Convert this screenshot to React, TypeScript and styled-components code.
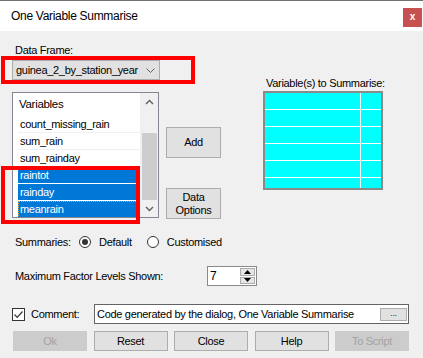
import React from "react";
import styled, { createGlobalStyle } from "styled-components";

const GlobalStyle = createGlobalStyle`
  html, body { margin: 0; padding: 0; background: #f0f0f0; }
  body {
    font-family: "Liberation Sans", Arial, sans-serif;
    font-size: 11px;
    letter-spacing: -0.3px;
    color: #000;
  }
  * { box-sizing: border-box; }
`;

const Window = styled.div`
  width: 423px;
  height: 358px;
  background: #f0f0f0;
  display: flex;
  flex-direction: column;
  overflow: hidden;
`;

const TitleBar = styled.div`
  height: 31px;
  flex-shrink: 0;
  background: #fff;
  border-top: 1px solid #707070;
  display: flex;
  justify-content: space-between;
  align-items: flex-start;
`;

const Title = styled.span`
  margin: 8px 0 0 11px;
  font-size: 12px;
  line-height: 14px;
`;

const CloseButton = styled.div`
  width: 19px;
  height: 19px;
  margin: 7px 1px 0 0;
  background: #c75050;
  color: #fff;
  font-weight: bold;
  font-size: 10px;
  display: flex;
  align-items: center;
  justify-content: center;
  padding-bottom: 2px;
`;

const Body = styled.div`
  flex: 1;
  display: flex;
  flex-direction: column;
`;

const TopSection = styled.div`
  display: flex;
  align-items: flex-start;
`;

const LeftCol = styled.div`
  width: 159px;
  flex-shrink: 0;
  display: flex;
  flex-direction: column;
`;

const FieldLabel = styled.div`
  margin-top: 13px;
  padding-left: 15px;
  line-height: 12px;
`;

const Highlight = styled.div`
  margin-left: 1px;
  width: 194px;
  height: 28px;
  border: 4px solid #ff0000;
  padding-left: 7px;
  flex-shrink: 0;
`;

const ComboBox = styled.div`
  width: 148px;
  height: 20px;
  background: #e1e1e1;
  border: 1px solid #adadad;
  display: flex;
  align-items: center;
  justify-content: space-between;
  padding: 0 4px 0 3px;
`;

const ListWrap = styled.div`
  position: relative;
  margin: 8px 0 0 12px;
  width: 147px;
  height: 126px;
`;

const ListBox = styled.div`
  height: 100%;
  border: 1px solid #828790;
  background: #fff;
  display: flex;
  overflow: hidden;
`;

const ListContent = styled.div`
  flex: 1;
  display: flex;
  flex-direction: column;
  border-right: 1px solid #f0f0f0;
`;

const ListHeader = styled.div`
  height: 23px;
  line-height: 23px;
  padding-left: 6px;
  font-size: 11.5px;
`;

const ListRow = styled.div<{ $selected?: boolean; $focus?: boolean }>`
  height: 17px;
  flex-shrink: 0;
  margin-left: 5px;
  padding-left: 2px;
  line-height: 16px;
  white-space: nowrap;
  border-bottom: 1px solid ${(p) => (p.$selected ? "#fff" : "#f0f0f0")};
  background: ${(p) => (p.$selected ? "#0078d7" : "transparent")};
  color: ${(p) => (p.$selected ? "#fff" : "#000")};
  outline: ${(p) => (p.$focus ? "1px dotted #f0a030" : "none")};
  outline-offset: -1px;
`;

const ScrollBar = styled.div`
  width: 17px;
  flex-shrink: 0;
  background: #f0f0f0;
  display: flex;
  flex-direction: column;
`;

const ScrollButton = styled.div`
  height: 17px;
  flex-shrink: 0;
  display: flex;
  align-items: center;
  justify-content: center;
`;

const ScrollTrack = styled.div`
  flex: 1;
  padding: 23px 1px 0;
  display: flex;
`;

const ScrollThumb = styled.div`
  flex: 1;
  background: #cdcdcd;
`;

const SelectionMark = styled.div`
  position: absolute;
  left: -11px;
  top: 74px;
  width: 139px;
  height: 58px;
  border: 4px solid #ff0000;
`;

const MidCol = styled.div`
  margin-left: 7px;
  width: 55px;
  flex-shrink: 0;
  display: flex;
  flex-direction: column;
`;

const PushButton = styled.button<{ $top?: number }>`
  margin-top: ${(p) => p.$top ?? 0}px;
  height: 31px;
  width: 55px;
  padding: 0;
  background: #e1e1e1;
  border: 1px solid #adadad;
  font: inherit;
  letter-spacing: -0.3px;
  line-height: 13px;
  color: #000;
`;

const RightCol = styled.div`
  margin-left: 42px;
  width: 121px;
  flex-shrink: 0;
  display: flex;
  flex-direction: column;
`;

const RightLabel = styled.div`
  margin-top: 46px;
  line-height: 12px;
  padding-left: 3px;
  white-space: nowrap;
`;

const SummaryGrid = styled.div`
  margin-top: 2px;
  width: 120px;
  height: 99px;
  border: 2px solid #8a8a8a;
  background: #fff;
  display: grid;
  grid-template-columns: 95px 20px;
  grid-auto-rows: 16px;
  gap: 1px;
  overflow: hidden;
`;

const GridCell = styled.div`
  background: #00ffff;
`;

const OptionRow = styled.div<{ $top: number; $left: number; $height: number }>`
  margin-top: ${(p) => p.$top}px;
  padding-left: ${(p) => p.$left}px;
  height: ${(p) => p.$height}px;
  display: flex;
  align-items: center;
  flex-shrink: 0;
`;

const RowLabel = styled.span<{ $width: number }>`
  width: ${(p) => p.$width}px;
  flex-shrink: 0;
  white-space: nowrap;
`;

const RadioOption = styled.label`
  display: flex;
  align-items: center;
  gap: 8px;
  margin-right: 15px;
`;

const RadioCircle = styled.span<{ $checked?: boolean }>`
  width: 12px;
  height: 12px;
  border-radius: 50%;
  border: 1px solid #333;
  background: #fff;
  display: flex;
  align-items: center;
  justify-content: center;
  &::after {
    content: "";
    width: 6px;
    height: 6px;
    border-radius: 50%;
    background: ${(p) => (p.$checked ? "#333" : "transparent")};
  }
`;

const SpinBox = styled.div`
  width: 50px;
  height: 20px;
  border: 1px solid #8a8a8a;
  background: #fff;
  display: flex;
  align-items: stretch;
`;

const SpinValue = styled.span`
  flex: 1;
  padding-left: 2px;
  line-height: 18px;
  font-size: 12px;
`;

const SpinButtons = styled.div`
  width: 15px;
  margin: 1px 1px 1px 0;
  display: flex;
  flex-direction: column;
  gap: 1px;
`;

const SpinButton = styled.div`
  flex: 1;
  background: #e6e6e6;
  border: 1px solid #acacac;
  display: flex;
  align-items: center;
  justify-content: center;
`;

const CheckBox = styled.span`
  width: 13px;
  height: 13px;
  flex-shrink: 0;
  border: 1px solid #333;
  background: #fff;
  display: flex;
  align-items: center;
  justify-content: center;
  margin-right: 6px;
`;

const TextBox = styled.div`
  width: 315px;
  height: 20px;
  border: 1px solid #646464;
  background: #fff;
  display: flex;
  align-items: center;
  justify-content: space-between;
  padding: 0 1px 0 2px;
  white-space: nowrap;
`;

const EllipsisButton = styled.span`
  width: 27px;
  height: 13px;
  background: #e1e1e1;
  border: 1px solid #adadad;
  font-size: 9px;
  line-height: 9px;
  text-align: center;
  color: #333;
`;

const ButtonRow = styled.div`
  margin-top: 7px;
  padding-left: 13px;
  display: flex;
  gap: 6.5px;
`;

const DialogButton = styled.button<{ $disabled?: boolean }>`
  width: 74px;
  height: 20px;
  padding: 0;
  font: inherit;
  letter-spacing: -0.3px;
  background: ${(p) => (p.$disabled ? "#cccccc" : "#e1e1e1")};
  border: 1px solid ${(p) => (p.$disabled ? "#cccccc" : "#adadad")};
  color: ${(p) => (p.$disabled ? "#a3a3a3" : "#000")};
`;

const Chevron = ({ up }: { up?: boolean }) => (
  <svg width="9" height="6" viewBox="0 0 9 6">
    <polyline
      points={up ? "1,5 4.5,1.5 8,5" : "1,1 4.5,4.5 8,1"}
      fill="none"
      stroke="#606060"
      strokeWidth="1.4"
    />
  </svg>
);

const Triangle = ({ up }: { up?: boolean }) => (
  <svg width="7" height="4" viewBox="0 0 7 4">
    <polygon points={up ? "0,4 3.5,0 7,4" : "0,0 3.5,4 7,0"} fill="#000" />
  </svg>
);

const variables = [
  { name: "count_missing_rain" },
  { name: "sum_rain" },
  { name: "sum_rainday" },
  { name: "raintot", selected: true },
  { name: "rainday", selected: true },
  { name: "meanrain", selected: true, focus: true },
];

export default function App() {
  return (
    <>
      <GlobalStyle />
      <Window>
        <TitleBar>
          <Title>One Variable Summarise</Title>
          <CloseButton>x</CloseButton>
        </TitleBar>
        <Body>
          <TopSection>
            <LeftCol>
              <FieldLabel>Data Frame:</FieldLabel>
              <Highlight>
                <ComboBox>
                  <span>guinea_2_by_station_year</span>
                  <svg width="9" height="5" viewBox="0 0 9 5">
                    <polyline points="0.5,0.5 4.5,4.5 8.5,0.5" fill="none" stroke="#606060" />
                  </svg>
                </ComboBox>
              </Highlight>
              <ListWrap>
                <ListBox>
                  <ListContent>
                    <ListHeader>Variables</ListHeader>
                    {variables.map((v) => (
                      <ListRow key={v.name} $selected={v.selected} $focus={v.focus}>
                        {v.name}
                      </ListRow>
                    ))}
                  </ListContent>
                  <ScrollBar>
                    <ScrollButton>
                      <Chevron up />
                    </ScrollButton>
                    <ScrollTrack>
                      <ScrollThumb />
                    </ScrollTrack>
                    <ScrollButton>
                      <Chevron />
                    </ScrollButton>
                  </ScrollBar>
                </ListBox>
                <SelectionMark />
              </ListWrap>
            </LeftCol>
            <MidCol>
              <PushButton $top={96}>Add</PushButton>
              <PushButton $top={30}>
                Data
                <br />
                Options
              </PushButton>
            </MidCol>
            <RightCol>
              <RightLabel>Variable(s) to Summarise:</RightLabel>
              <SummaryGrid>
                {Array.from({ length: 12 }).map((_, i) => (
                  <GridCell key={i} />
                ))}
              </SummaryGrid>
            </RightCol>
          </TopSection>

          <OptionRow $top={16} $left={15} $height={14}>
            <RowLabel $width={64}>Summaries:</RowLabel>
            <RadioOption>
              <RadioCircle $checked />
              Default
            </RadioOption>
            <RadioOption>
              <RadioCircle />
              Customised
            </RadioOption>
          </OptionRow>

          <OptionRow $top={17} $left={15} $height={20}>
            <RowLabel $width={192}>Maximum Factor Levels Shown:</RowLabel>
            <SpinBox>
              <SpinValue>7</SpinValue>
              <SpinButtons>
                <SpinButton>
                  <Triangle up />
                </SpinButton>
                <SpinButton>
                  <Triangle />
                </SpinButton>
              </SpinButtons>
            </SpinBox>
          </OptionRow>

          <OptionRow $top={18} $left={12} $height={20}>
            <CheckBox>
              <svg width="11" height="11" viewBox="0 0 11 11">
                <polyline points="1.5,5.5 4.2,8.3 9.5,2.5" fill="none" stroke="#333" strokeWidth="1.2" />
              </svg>
            </CheckBox>
            <RowLabel $width={63}>Comment:</RowLabel>
            <TextBox>
              <span>Code generated by the dialog, One Variable Summarise</span>
              <EllipsisButton>...</EllipsisButton>
            </TextBox>
          </OptionRow>

          <ButtonRow>
            <DialogButton $disabled>Ok</DialogButton>
            <DialogButton>Reset</DialogButton>
            <DialogButton>Close</DialogButton>
            <DialogButton>Help</DialogButton>
            <DialogButton $disabled>To Script</DialogButton>
          </ButtonRow>
        </Body>
      </Window>
    </>
  );
}
